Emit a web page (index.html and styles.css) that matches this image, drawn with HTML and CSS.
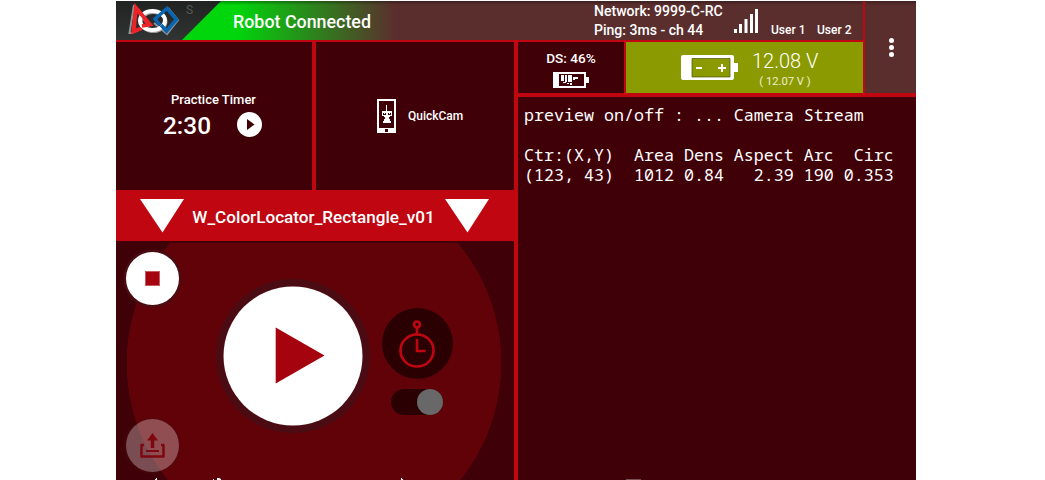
FILE: index.html
```html
<!DOCTYPE html>
<html lang="en">
<head>
<meta charset="utf-8">
<title>Driver Station</title>
<link rel="stylesheet" href="styles.css">
</head>
<body>
<main class="app">
  <header class="top">
    <div class="status">
      <div class="brand">
        <svg class="logo" width="54" height="34" viewBox="127 3 54 34" fill="none">
          <path d="M134 5L129.500 33H132L150 25" stroke="#929292" stroke-width="2"/>
          <path d="M168 8L178 20L167 34L154 23" stroke="#929292" stroke-width="2"/>
          <path d="M147 26L133.500 31.500L136 8L149 25" stroke="#ee2329" stroke-width="4"/>
          <ellipse cx="153.500" cy="22" rx="12.500" ry="9.500" stroke="#999" stroke-width="3"/>
          <ellipse cx="152.500" cy="20.500" rx="12.500" ry="9.500" stroke="#fff" stroke-width="4"/>
          <path d="M137 9L150 24.500L142 26" stroke="#ee2329" stroke-width="3.800"/>
          <path d="M160 25L155 19L167 8.500L176.500 19.500L166.500 31L161 25" stroke="#0865b2" stroke-width="3.500"/>
        </svg>
        <span class="shade">S</span>
      </div>
      <h1 class="connected">Robot Connected</h1>
      <div class="network"><div>Network: 9999-C-RC</div><div>Ping: 3ms - ch 44</div></div>
      <svg class="signal" width="26" height="27" fill="#fff"><path d="M0 21h3v4H0zM5 16h3v9h-3zM10.500 11h3v14h-3zM16 6h3v19h-3zM21 1h3v24h-3z"/></svg>
      <span class="user">User 1</span><span class="user">User 2</span>
    </div>
  </header>
  <div class="menu"><i></i><i></i><i></i></div>
  <section class="left">
    <div class="tools">
      <div class="timer">
        <div class="timer-label">Practice Timer</div>
        <div class="timer-row"><span>2:30</span>
          <svg width="25" height="25"><circle cx="12.500" cy="12.500" r="12.500" fill="#fff"/><path d="M10 7v11l7.500-5.500z" fill="#3f0107"/></svg>
        </div>
      </div>
      <div class="quickcam">
        <svg width="19" height="34" shape-rendering="crispEdges"><path d="M0 0h19v34H0z" fill="#fff"/><path d="M2 2h15v27H2zM8 30h3v3H8z" fill="#3f0107"/><path d="M9 6h1v2H9zM9 8h1v4H9zM5 12h10v6H5zM8 18h4v3H8zM7 20h6v2H7zM6 22h8v2H6z" fill="#fff"/><path d="M6 14h3v2H6zM11 14h3v2h-3zM5 17h2v1H5zM13 17h2v1h-2z" fill="#3f0107"/><path d="M7 14h1v1H7zM12 14h1v1h-1z" fill="#fff"/></svg>
        <span>QuickCam</span>
      </div>
    </div>
    <div class="opmode">
      <svg width="44" height="34"><path d="M0 0h44L22.500 33.500z" fill="#fff"/></svg>
      <span>W_ColorLocator_Rectangle_v01</span>
      <svg width="44" height="34"><path d="M0 0h44L22.500 33.500z" fill="#fff"/></svg>
    </div>
    <div class="stage">
      <div class="side">
        <div class="round stop"><i></i></div>
        <div class="round upload">
          <svg width="25" height="25" fill="none" stroke="#7f0710" stroke-width="3"><path d="M4 12H1.500V23.500h22V12H21" stroke-width="2.500" stroke-linejoin="round"/><path d="M6 18h13" stroke-width="2"/><path d="M12.500 15V5" stroke-width="3.500"/><path d="M7 7.500L12.500 0L18 7.500z" fill="#7f0710" stroke="none"/></svg>
        </div>
      </div>
      <svg class="play" width="156" height="156"><circle cx="78" cy="78" r="77" fill="#4a0c12"/><circle cx="78" cy="78" r="69.500" fill="#fff"/><path d="M60.700 49.500v56L109.500 77.500z" fill="#a5030e"/></svg>
      <div class="clock-col">
        <div class="clock"><svg width="36" height="48" fill="none" stroke="#c00610" stroke-width="2.600"><circle cx="18" cy="4.500" r="3"/><path d="M18 8v6M18 20v11h7.500" stroke-linecap="round"/><ellipse cx="18" cy="30.500" rx="16.500" ry="16"/></svg></div>
        <div class="switch"><i></i></div>
      </div>
      <svg class="edge" width="398" height="2" fill="#fff"><path d="M40 0h1v2h-2v-1h1zM97 1h1v1h-1zM101 0h2l2 1v1h-4zM285 0h1v1h1v1h-2z"/></svg>
    </div>
  </section>
  <section class="right">
    <div class="batteries">
      <div class="ds"><div>DS: 46%</div>
        <svg width="36" height="16" shape-rendering="crispEdges"><path d="M0 0h33v5h3v6h-3v5H0z" fill="#fff"/><path d="M6 2h25v12H6z" fill="#3f0107"/><path d="M8 3h3v6H8zM12 3h2v7h-2zM15 3h4v7h-4zM20 5h5v2h-5zM20 7h2v1h-2zM10 10h3v1h-3zM14 11h2v1h-2zM17 11h2v2h-2z" fill="#fff"/></svg>
      </div>
      <div class="robot">
        <svg width="57" height="25"><path d="M2 0h49a2 2 0 0 1 2 2v6h4v9h-4v6a2 2 0 0 1-2 2H2a2 2 0 0 1-2-2V2a2 2 0 0 1 2-2z" fill="#fff"/><path d="M11 3.500h38V22H11z" fill="#8b9a01" stroke="#4b5400" stroke-width=".7"/><path d="M15 12h6v2h-6zM37 12h8v2h-8zM40 9h2v8h-2z" fill="#fff"/></svg>
        <div class="volts"><div class="now">12.08 V</div><div class="low">( 12.07 V )</div></div>
      </div>
    </div>
    <pre class="telemetry">preview on/off : ... Camera Stream

Ctr:(X,Y)  Area Dens Aspect Arc  Circ
(123, 43)  1012 0.84   2.39 190 0.353</pre>
    <i class="foot"></i>
  </section>
</main>
</body>
</html>
```
FILE: styles.css
```css
* { box-sizing: border-box; }
body { margin: 0; background: #fff; overflow: hidden; font-family: Roboto, sans-serif; font-weight: 500; color: #fff; }
svg { display: block; flex: none; }
.app {
  width: 800px; height: 479px; margin: 1px 0 0 116px; background: #c00610;
  display: grid; grid-template-columns: 398px 349px 2px 51px; grid-template-rows: 39px minmax(0, 1fr);
  row-gap: 2px;
}
.top { grid-column: 1 / 3; }
.status { height: 39px; display: flex; background: linear-gradient(#0005, #0000 4px), linear-gradient(90deg, #00d60b 120px, #5b2e2e 279px); }
.brand { width: 105px; height: 39px; background: linear-gradient(#202322, #303432); clip-path: polygon(0 0, 100% 0, 66px 100%, 0 100%); display: flex; padding: 2px 0 0 11px; }
.shade { color: #555857; font-size: 12px; font-weight: 400; margin: 0 0 0 5px; }
.connected { margin: 9px 0 0 12px; width: 361px; font-size: 17.850px; line-height: 24px; font-weight: 500; white-space: nowrap; }
.network { font-size: 14.060px; line-height: 19px; padding-top: 1px; width: 140px; white-space: nowrap; }
.signal { margin: 7px 11px 0 0; }
.user { font-size: 12px; line-height: 16px; margin-top: 21px; width: 46px; white-space: nowrap; }
.menu { grid-column: 4; grid-row: 1 / 3; height: 92px; background: linear-gradient(#0004, #0000 5px), #5b2e2e; display: flex; flex-direction: column; align-items: center; justify-content: center; gap: 2px; padding-left: 1px; z-index: 1; }
.menu i { width: 5px; height: 5px; border-radius: 50%; background: #fff; }
.left { grid-column: 1; grid-row: 2; display: grid; grid-template-rows: 148px 51px minmax(0, 1fr); }
.tools { display: grid; grid-template-columns: 196px 198px; gap: 4px; }
.timer, .quickcam, .ds, .telemetry { background: #3f0107; }
.timer { padding-top: 50px; text-align: center; }
.timer-label { font-size: 13px; line-height: 16px; padding-right: 1px; }
.timer-row { display: flex; align-items: center; gap: 26px; padding: 4px 0 0 47px; font-size: 24.400px; line-height: 28px; }
.timer-row svg { margin-top: -4px; }
.quickcam { display: flex; align-items: center; gap: 12px; font-size: 12px; padding-left: 61px; }
.opmode { display: flex; padding: 9px 25px 0 24px; justify-content: space-between; font-size: 17.150px; line-height: 37px; white-space: nowrap; }
.opmode span { margin: 0 1px 0 -1px; }
.stage { position: relative; overflow: hidden; background: radial-gradient(circle 187.5px at 198px 122px, #610209 187px, #3f0107 187.500px); display: flex; box-shadow: inset 0 2px #3f0107; }
.side { width: 99px; padding: 11px 0 0 10px; display: flex; flex-direction: column; gap: 114px; flex: none; }
.round { width: 53px; height: 53px; border-radius: 50%; display: flex; align-items: center; justify-content: center; flex: none; box-shadow: 0 0 0 2.500px #4a0c12; }
.stop { background: #fff; }
.stop i { width: 15px; height: 15px; background: #a5030e; border: 1px solid #c75961; }
.upload { background: #ffffff4d; box-shadow: 0 0 0 2px #4a0c1255; }
.play { margin-top: 37px; }
.clock-col { width: 72px; margin: 67px 0 0 10px; display: flex; flex-direction: column; align-items: center; gap: 10px; flex: none; }
.clock { width: 71px; height: 71px; border-radius: 50%; background: #2b0002; display: flex; align-items: center; justify-content: center; padding: 1px 1px 0 0; }
.switch { width: 52px; height: 26px; margin-right: 1px; border-radius: 13px; background: #2b0002; display: flex; justify-content: flex-end; }
.switch i { width: 26px; height: 26px; border-radius: 50%; background: #686868; }
.edge { position: absolute; left: 0; bottom: 0; }
.right { grid-column: 2 / 5; grid-row: 2; padding-left: 4px; display: grid; grid-template-rows: 51px minmax(0, 1fr); gap: 4px; position: relative; }
.batteries { display: grid; grid-template-columns: 106px 237px; gap: 2px; }
.ds { display: flex; flex-direction: column; align-items: center; padding-top: 8px; gap: 5px; font-size: 13.600px; line-height: 17px; }
.robot { background: #8b9a01; display: flex; padding: 13px 0 0 55px; gap: 14px; }
.volts { margin-top: -6px; width: 66px; text-align: center; white-space: nowrap; }
.now { font-size: 20px; line-height: 25px; font-weight: 300; }
.low { font-size: 11.200px; line-height: 16px; font-weight: 400; color: #edf0cf; }
.telemetry { margin: 0; padding: 8px 6px; font: 400 16.667px/20px "Droid Sans Mono", "Noto Sans Mono", "DejaVu Sans Mono", monospace; }
.foot { position: absolute; left: 112px; bottom: 0; width: 15px; height: 1px; background: #765055; }
```
